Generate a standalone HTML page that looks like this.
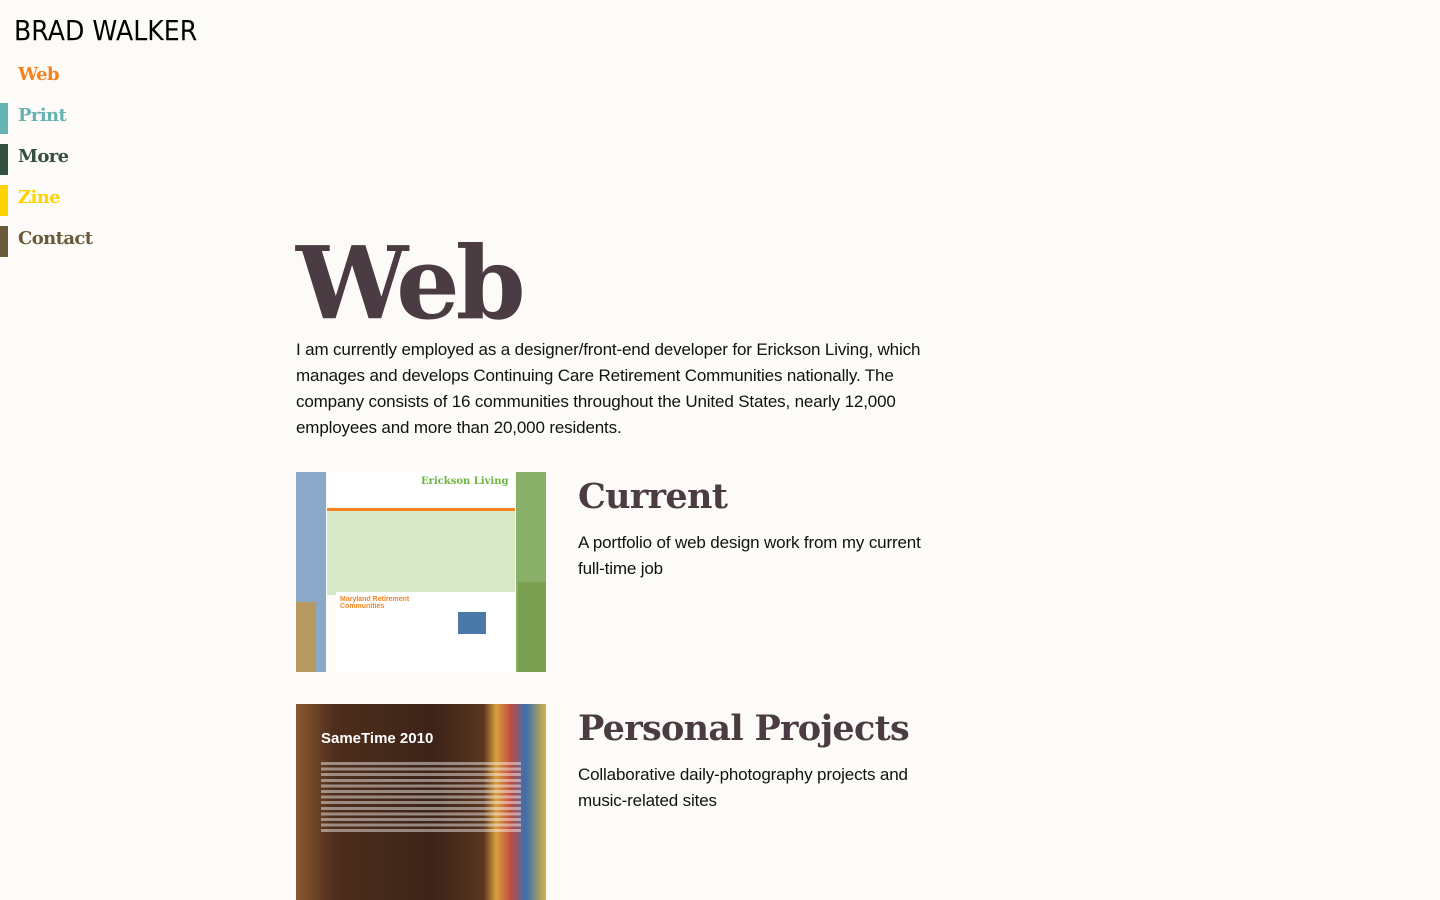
<!DOCTYPE html>
<html><head><meta charset="utf-8"><style>
body{margin:0;background:#fdfbf7;width:1440px;height:900px;overflow:hidden;position:relative;font-family:"Liberation Sans",sans-serif;color:#111}
.logo{position:absolute;left:14px;top:14px;font-family:"DejaVu Sans",sans-serif;font-size:28px;letter-spacing:0px;color:#000;transform:scaleX(0.9);transform-origin:left}
.nav a{position:absolute;left:18px;font-family:"DejaVu Serif",serif;font-weight:bold;font-size:18px;text-decoration:none;letter-spacing:-0.6px}
.bar{position:absolute;left:0;width:8px;height:31px}
h1{position:absolute;left:296px;top:224px;margin:0;font-family:"DejaVu Serif",serif;font-weight:900;font-size:100px;color:#4a3c42;letter-spacing:-4px}
h2{position:absolute;left:578px;margin:0;font-family:"DejaVu Serif",serif;font-weight:bold;font-size:35px;color:#4a3c42;letter-spacing:-0.7px}
p{position:absolute;margin:0;font-size:17px;line-height:26px;color:#111;letter-spacing:-0.15px}
.img{position:absolute;left:296px;width:250px}
</style></head><body>
<div class="logo">BRAD WALKER</div>
<div class="nav">
<a style="top:64px;color:#f5821f">Web</a>
<div class="bar" style="top:103px;background:#66b3b3"></div><a style="top:105px;color:#66b3b3">Print</a>
<div class="bar" style="top:144px;background:#34513f"></div><a style="top:146px;color:#34513f">More</a>
<div class="bar" style="top:185px;background:#ffd200"></div><a style="top:187px;color:#ffd200">Zine</a>
<div class="bar" style="top:226px;background:#6b5a3a"></div><a style="top:228px;color:#6b5a3a">Contact</a>
</div>
<h1>Web</h1>
<p style="left:296px;top:337px;width:650px">I am currently employed as a designer/front-end developer for Erickson Living, which manages and develops Continuing Care Retirement Communities nationally. The company consists of 16 communities throughout the United States, nearly 12,000 employees and more than 20,000 residents.</p>
<div class="img" style="top:472px;height:200px;background:linear-gradient(90deg,#8aa9c8 0 12%,transparent 12% 88%,#8ab06a 88%)">
 <div style="position:absolute;left:31px;top:0;width:188px;height:34px;background:#fff"><span style="position:absolute;left:94px;top:4px;font-family:'DejaVu Serif',serif;font-size:10px;color:#6cb43f;font-weight:bold">Erickson Living</span></div>
 <div style="position:absolute;left:31px;top:36px;width:188px;height:84px;background:#d6e8c8;border-top:3px solid #f5821f"></div>
 <div style="position:absolute;left:40px;top:120px;width:120px;height:80px;background:#fff"><span style="position:absolute;left:4px;top:4px;font-size:7px;color:#f5821f;font-weight:bold">Maryland Retirement<br>Communities</span></div>
 <div style="position:absolute;left:160px;top:120px;width:59px;height:80px;background:#fff"></div>
 <div style="position:absolute;left:162px;top:140px;width:28px;height:22px;background:#4a79a8"></div>
 <div style="position:absolute;left:0;top:130px;width:20px;height:70px;background:#b89a60"></div>
 <div style="position:absolute;left:222px;top:110px;width:28px;height:90px;background:#7aa050"></div>
</div>
<h2 style="top:476px">Current</h2>
<p style="left:578px;top:530px;width:370px">A portfolio of web design work from my current full-time job</p>
<div class="img" style="top:704px;height:196px;background:linear-gradient(90deg,#8a5a30 0,#4e2e1c 15%,#3c2418 55%,#5a3520 75%,#d8a040 80%,#c04a40 86%,#3a70b0 92%,#d8b040 100%)">
 <div style="position:absolute;left:25px;top:26px;font-size:15px;font-weight:bold;color:#fff">SameTime 2010</div>
 <div style="position:absolute;left:25px;top:58px;width:200px;height:72px;background:repeating-linear-gradient(180deg,rgba(255,255,255,.45) 0 3px,transparent 3px 5.6px)"></div>
</div>
<h2 style="top:708px">Personal Projects</h2>
<p style="left:578px;top:762px;width:370px">Collaborative daily-photography projects and music-related sites</p>
</body></html>
